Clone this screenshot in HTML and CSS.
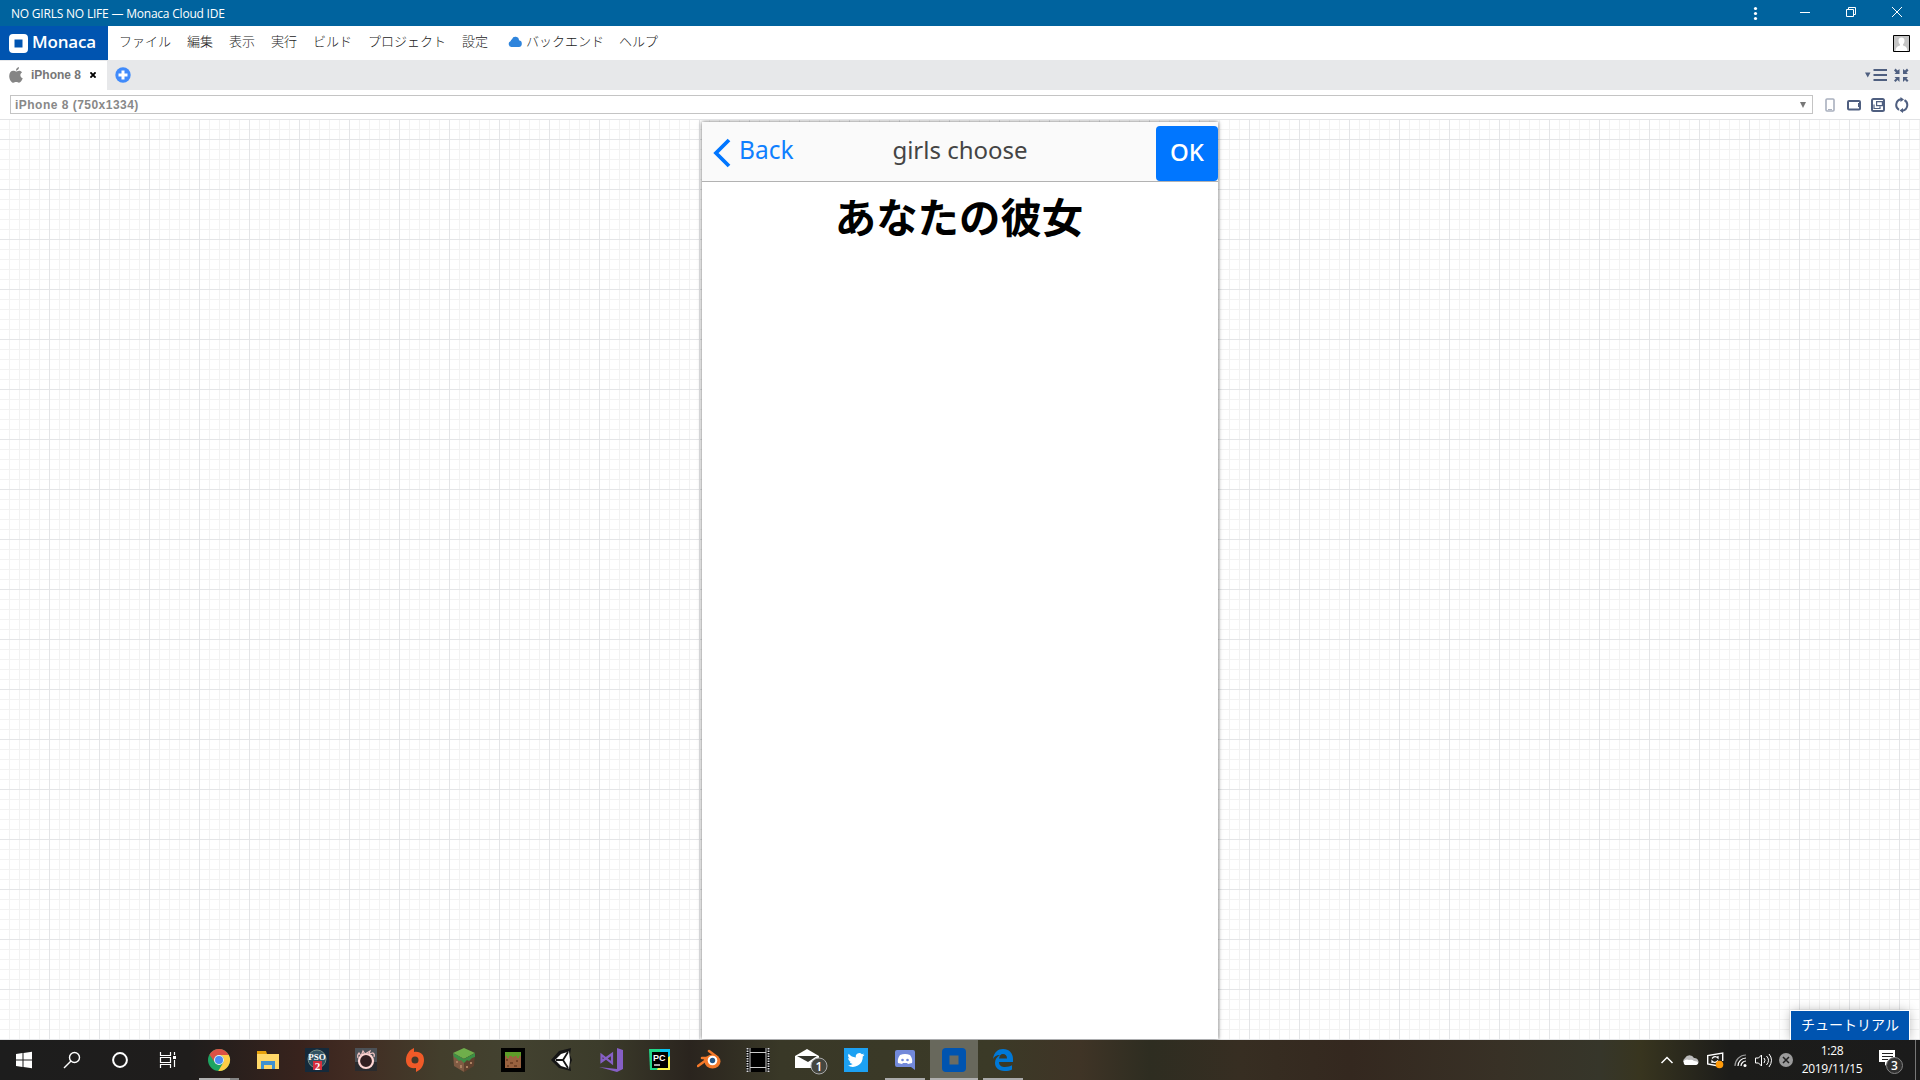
FILE: index.html
```html
<!DOCTYPE html>
<html lang="ja">
<head>
<meta charset="utf-8">
<title>NO GIRLS NO LIFE — Monaca Cloud IDE</title>
<link rel="stylesheet" href="styles.css">
</head>
<body>
<header class="titlebar">
  <span class="title">NO GIRLS NO LIFE — Monaca Cloud IDE</span>
  <svg class="window-controls" width="170" height="26" viewBox="0 0 170 26">
    <g fill="#fff"><circle cx="5.500" cy="8.500" r="1.600"/><circle cx="5.500" cy="13.500" r="1.600"/><circle cx="5.500" cy="18.500" r="1.600"/></g>
    <g fill="none" stroke="#fff"><path d="M50 12.500h10"/><path d="M96.500 9.500h7v7h-7zM98.500 9v-1.500h7v7h-1.500"/><path d="M142 7l10 10M152 7l-10 10"/></g>
  </svg>
</header>
<nav class="menubar">
  <div class="brand">
    <svg width="19" height="19" viewBox="0 0 19 19"><path fill="#fff" fill-rule="evenodd" d="M4 0h11a4 4 0 0 1 4 4v11a4 4 0 0 1-4 4H4a4 4 0 0 1-4-4V4a4 4 0 0 1 4-4zm1.500 5.500v8h8v-8z"/></svg>
    <span class="brand-name">Monaca</span>
  </div>
  <span class="menu file">ファイル</span><span class="menu edit">編集</span><span class="menu view">表示</span><span class="menu run">実行</span><span class="menu build">ビルド</span><span class="menu project">プロジェクト</span><span class="menu config">設定</span>
  <span class="menu backend"><svg width="14" height="11" viewBox="0 0 14 11"><path fill="#2e84dc" d="M3.300 11A3.200 3.200 0 0 1 2.700 4.900 2 2 0 0 1 4 3.200 3.600 3.600 0 0 1 11 4.300 3.400 3.400 0 0 1 11 11z"/></svg>バックエンド</span>
  <span class="menu help">ヘルプ</span>
  <svg class="avatar" width="17" height="17" viewBox="0 0 17 17"><path fill="#c5c5c5" stroke="#000" d="M.5.5h16v16H.5z"/><path fill="#fff" d="M8.500 2.500c2 0 3.200 1.400 3 3.500-.1 1.500-.7 2.600-1.500 3.200v1.300c2.600.8 4.200 1.800 4.400 5.500H2.600c.2-3.700 1.800-4.700 4.400-5.500V9.200C6.200 8.600 5.600 7.500 5.500 6c-.2-2.100 1-3.500 3-3.500z"/></svg>
</nav>
<div class="tabs">
  <div class="tab">
    <svg width="14" height="16" viewBox="0 0 14 16"><path fill="#858585" d="M10 0c.1 2-1.300 3.600-3.100 3.700C6.800 1.900 8.300.2 10 0zM7 4.500c.7 0 1.700-.8 3.100-.8 1.200 0 2.300.6 3 1.500-2.600 1.600-2.200 5 .6 6.100-.6 1.800-2.200 4.500-3.700 4.500-1.100 0-1.500-.7-2.800-.7-1.300 0-1.800.7-2.800.7C2.400 15.800.2 12.200.2 8.900c0-3.200 2-5.100 4-5.100 1.300 0 2.200.7 2.800.7z"/></svg>
    <span class="tab-name">iPhone 8</span>
    <svg width="6" height="6" viewBox="0 0 6 6"><path stroke="#000" stroke-width="1.900" d="M.4.4l5.200 5.200M5.600.4L.4 5.600"/></svg>
  </div>
  <svg class="add-tab" width="16" height="16" viewBox="0 0 16 16"><circle cx="8" cy="8" r="7.700" fill="#418bfb"/><path d="M8 3.500v9M3.500 8h9" stroke="#fff" stroke-width="3"/></svg>
  <svg class="tab-tools" width="44" height="16" viewBox="0 0 44 16"><g fill="#4f5f80"><path d="M0 5.500h5.500l-2.750 5zM8.500 2h13.500v2H8.500zM8.500 7h13.500v2H8.500zM8.500 12h13.500v2H8.500z"/><path d="M34.500 2v5h-5l1.500-1.500-2-2L30.500 1.500l2 2zM38 2v5h5l-1.500-1.500 2-2L42 1.500l-2 2zM34.500 15v-5h-5l1.500 1.500-2 2 1.500 1.500 2-2zM38 15v-5h5l-1.500 1.500 2 2-1.500 1.500-2-2z"/></g></svg>
</div>
<div class="device-bar">
  <div class="select"><span>iPhone 8 (750x1334)</span><svg width="6" height="6" viewBox="0 0 6 6"><path fill="#777" d="M0 0h6L3 6z"/></svg></div>
  <svg width="84" height="16" viewBox="0 0 84 16" fill="none">
    <rect x="1" y="2" width="8" height="12" rx="1" stroke="#a9b0be" stroke-width="1.600"/><path d="M3 12.500h4" stroke="#a9b0be"/>
    <rect x="23" y="4" width="12" height="8.500" rx="1" stroke="#4f5f80" stroke-width="2"/><path d="M34 6v4" stroke="#4f5f80" stroke-width="2"/>
    <rect x="47" y="2" width="12" height="12" rx="1.500" stroke="#4f5f80" stroke-width="2"/><path d="M51.600 4.600h5.800v4h-5.800zM49 7.500v4h6v-2" stroke="#4f5f80" stroke-width="1.200"/>
    <path d="M74 12.800A5.700 5.700 0 0 1 76 2.300M79.500 3.200A5.700 5.700 0 0 1 77.500 13.700" stroke="#4f5f80" stroke-width="2"/><path d="M75.500 0v5l3.500-2.500zM78 16v-5l-3.500 2.500z" fill="#4f5f80"/>
  </svg>
</div>
<main class="canvas">
  <section class="phone">
    <div class="phone-bar">
      <div class="back"><svg width="18" height="30" viewBox="0 0 18 30"><path d="M16 2L3 15l13 13" fill="none" stroke="#0076ff" stroke-width="3.800"/></svg><span>Back</span></div>
      <div class="phone-title">girls choose</div>
      <div class="action"><div class="ok">OK</div></div>
    </div>
    <h1>あなたの彼女</h1>
  </section>
  <div class="tutorial">チュートリアル</div>
</main>
<footer class="taskbar">
  <div class="app system"><svg width="24" height="24" viewBox="0 0 24 24"><path fill="#fff" d="M4 6l6.500-1v6.500H4zM11.500 4.900L20 3.700v7.800h-8.500zM4 12.500h6.500V19L4 18zM11.500 12.500H20v7.800l-8.500-1.200z"/></svg></div>
  <div class="app system"><svg width="24" height="24" viewBox="0 0 24 24"><g fill="none" stroke="#fff" stroke-width="1.400"><circle cx="14.500" cy="9.500" r="5"/><path d="M11 13l-7 7"/></g></svg></div>
  <div class="app system"><svg width="24" height="24" viewBox="0 0 24 24"><circle cx="12" cy="12" r="6.900" fill="none" stroke="#fff" stroke-width="2"/></svg></div>
  <div class="app system"><svg width="24" height="24" viewBox="0 0 24 24"><path d="M4.500 4v3.500h10V4M4.500 20v-3.500h10V20M4.500 9.500h10v5h-10zM18.500 4v3M18.500 12v7" fill="none" stroke="#fff" stroke-width="1.200"/><path d="M17 8h3v3h-3z" fill="#fff"/></svg></div>
  <div class="app open multi"><svg width="24" height="24" viewBox="0 0 24 24"><circle cx="12" cy="12" r="11" fill="#1da462"/><path fill="#dd5144" d="M2.500 6.500a11 11 0 0 1 19 0L22 7H12a5 5 0 0 0-4.700 6.700z"/><path fill="#ffcd46" d="M12 7h9.800a11 11 0 0 1-10.500 16l5-8.500A5 5 0 0 0 12 7z"/><circle cx="12" cy="12" r="5" fill="#f1f1f1"/><circle cx="12" cy="12" r="4" fill="#4c8bf5"/></svg></div>
  <div class="app"><svg width="24" height="24" viewBox="0 0 24 24"><path fill="#e8a20c" d="M1 3h9l1 3h12v3H1z"/><path fill="#ffd768" d="M1 6h22v15H1z"/><path fill="#3f91d1" d="M5 13h14v8h-3v-4H8v4H5z"/></svg></div>
  <div class="app"><svg width="24" height="24" viewBox="0 0 24 24"><path fill="#152a3b" d="M0 0h24v24H0z"/><circle cx="12" cy="11" r="9" fill="#315262" stroke="#778b82"/><path fill="#d42e3d" d="M8 13h9v9H8z"/><text x="12" y="12" class="pso">PSO</text><text x="12.500" y="22" class="pso two">2</text></svg></div>
  <div class="app"><svg width="24" height="24" viewBox="0 0 24 24"><path fill="#4c5157" d="M1 0h22v23H1z"/><path fill="#2a2b2e" d="M1 14h22v9H1z"/><circle cx="12" cy="13" r="7" fill="#322022" stroke="#ffd7d5" stroke-width="2.200"/><path d="M4 10q-1-3 1-5l2 3 2-5 2 3 5-3-1 3 4-1q2 1 1 4" fill="none" stroke="#efc2c1" stroke-width="1.200"/></svg></div>
  <div class="app"><svg width="24" height="24" viewBox="0 0 24 24"><path fill="#f05a28" fill-rule="evenodd" d="M11 0v4C18 3 21 7 21 12c0 5-3 10-8 12v-4C6 21 3 17 3 12 3 7 6 2 11 0zM12 8.500a3.500 3.500 0 1 0 0 7 3.500 3.500 0 0 0 0-7z"/></svg></div>
  <div class="app"><svg width="24" height="24" viewBox="0 0 24 24"><path fill="#6fae4b" d="M12 0l11 5-11 6L1 5z"/><path fill="#805b43" d="M1 5l11 6v13L2 18z"/><path fill="#60412e" d="M23 5l-11 6v13l10-6z"/><path fill="#3b8f45" d="M1 5l11 6 11-6v4l-3 1-3 3-2-1-3 3-3-3-2 1-3-3-2-1z"/><path d="M4 13h2v2H4zM8 17h2v3H8zM14 18h2v2h-2zM18 14h2v2h-2z" fill="#aa8060"/></svg></div>
  <div class="app"><svg width="24" height="24" viewBox="0 0 24 24"><path d="M0 0h24v24H0z"/><path fill="#99623f" d="M4 4h16v16H4z"/><path fill="#5e9c29" d="M4 4h16v4h-2v2h-2V8h-3v1h-2V8H8v2H6V8H4z"/><path d="M5 11h2v2H5zM9 14h3v2H9zM15 12h2v2h-2zM13 17h3v2h-3zM6 17h2v2H6z" fill="#734428"/></svg></div>
  <div class="app"><svg width="24" height="24" viewBox="0 0 24 24"><path fill="#151515" d="M1 12L9 3l12-3-1 7 2 5-2 5 1 6-12-3z"/><path fill="#fff" d="M5 12l6-6 8-2.500 1 8.500-1 8.500-8-2.500z"/><path d="M6 12h7l5-8M13 12l5 8" fill="none" stroke="#151515" stroke-width="1.800"/></svg></div>
  <div class="app"><svg width="24" height="24" viewBox="0 0 24 24"><path fill="#865fc5" d="M18 0l6 2v19l-6 3L0 19l18 2z"/><path fill="none" stroke="#865fc5" stroke-width="2.200" d="M2.500 7v6.500L13 6v9z"/></svg></div>
  <div class="app"><svg width="24" height="24" viewBox="0 0 24 24"><path fill="#21d789" d="M1 1h13l-4 21H2z"/><path fill="#07c3f2" d="M12 1h10v9l-9 3z"/><path fill="#fcf84a" d="M22 8v14H9l3-7z"/><path d="M4 4h16v16H4z"/><path d="M6 17h6" stroke="#fff" stroke-width="1.300"/><text x="5" y="12.500" class="pc">PC</text></svg></div>
  <div class="app"><svg width="24" height="24" viewBox="0 0 24 24"><path d="M1 18l11-8H5M12 3l8 6" fill="none" stroke="#f5792a" stroke-width="2.600" stroke-linecap="round"/><ellipse cx="15.500" cy="13.500" rx="8" ry="7" fill="#f5792a"/><path fill="#f5792a" d="M5 9h8l4-2-4 6H8z"/><circle cx="15.500" cy="12.500" r="4.800" fill="#fff"/><circle cx="15.500" cy="12.500" r="2.700" fill="#265787"/></svg></div>
  <div class="app"><svg width="24" height="24" viewBox="0 0 24 24"><path d="M0 0h24v24H0z"/><path d="M1.500 0v24M22.500 0v24" stroke="#ddd" stroke-width="2" stroke-dasharray="1.500 1"/><path d="M4 0v24M20 0v24M4 4.500h16M4 19.500h16" stroke="#ccc"/></svg></div>
  <div class="app"><svg width="34" height="30" viewBox="0 0 34 30" class="mail"><path fill="#fff" d="M0 11l12-7 12 7v12H0z"/><path fill="#33342b" d="M2 11h20l-9 6z"/><circle cx="24" cy="21" r="8" fill="#45463f" stroke="#aaa"/><text x="24" y="25.500" class="badge">1</text></svg></div>
  <div class="app"><svg width="24" height="24" viewBox="0 0 24 24"><path fill="#1da1f2" d="M0 0h24v24H0z"/><path fill="#fff" transform="translate(3.500 3.500) scale(.71)" d="M24 4.600a10 10 0 0 1-2.800.8 5 5 0 0 0 2.100-2.700 10 10 0 0 1-3.100 1.200 4.900 4.900 0 0 0-8.400 4.500A14 14 0 0 1 1.700 3.200a4.900 4.900 0 0 0 1.500 6.500 5 5 0 0 1-2.200-.6 4.900 4.900 0 0 0 3.900 4.900 5 5 0 0 1-2.200.1 4.900 4.900 0 0 0 4.600 3.400A10 10 0 0 1 0 19.500 14 14 0 0 0 21.500 7 10 10 0 0 0 24 4.600z"/></svg></div>
  <div class="app open"><svg width="24" height="24" viewBox="0 0 24 24"><path fill="#7289da" d="M4 2h16a2 2 0 0 1 2 2v18l-4-3H4a2 2 0 0 1-2-2V4a2 2 0 0 1 2-2z"/><path fill="#fff" d="M7 7q5-2 10 0 3 4 2 8l-4 1-1-1h-4l-1 1-4-1q-1-4 2-8z"/><circle cx="9.500" cy="12" r="1.300" fill="#7289da"/><circle cx="14.500" cy="12" r="1.300" fill="#7289da"/></svg></div>
  <div class="app open active"><svg width="24" height="24" viewBox="0 0 24 24"><rect width="24" height="24" rx="4" fill="#0054b0"/><path fill="#6c6c61" d="M7.500 7.500h9v9h-9z"/></svg></div>
  <div class="app open"><svg width="24" height="24" viewBox="0 0 24 24"><path fill="#0078d7" d="M2 11C3 4 7 1 12 1c6 0 10 4 10 10v3H8c0 4 3 5 6 5 3 0 5-.7 7-1.700v4.200c-2 1-4 1.500-7.500 1.500C7 23 4 19 4 15c0-4 2-6 5-8-4 0-6 2-7 4zm6-.5h8c0-3-1.500-4.500-4-4.500S8.500 8 8 10.500z"/></svg></div>
  <div class="tray">
    <svg width="133" height="40" viewBox="0 0 133 40">
      <path d="M1.500 23l5.500-5.500 5.500 5.500" fill="none" stroke="#fff" stroke-width="1.500"/>
      <path fill="#bbb" d="M23 22a5 5 0 0 1 2-4 5 5 0 0 1 9 0 4 4 0 0 1 4 6z"/><path fill="#fff" d="M25 25a3 3 0 0 1 0-5q2-1 4 0 3-1 5 1 4 0 4 2 0 2-3 2z"/>
      <path d="M56 25.500l-8.300-1.500v-8.500l15-2.500v8" fill="none" stroke="#fff" stroke-width="1.400"/><path d="M52 18.500q3-3.500 6-.5v-2M58 20.500q-3 3.500-6 .5v2" fill="none" stroke="#fff" stroke-width="1.200"/><circle cx="59.500" cy="24.500" r="3.800" fill="#ff9a09"/>
      <g fill="none" stroke="#999" stroke-width="1.200"><path d="M75 26a11 11 0 0 1 11-11"/><path stroke="#fff" d="M78 26a8 8 0 0 1 8-8M81 26a5 5 0 0 1 5-5"/></g><circle cx="85" cy="25.500" r="1.500" fill="#fff"/>
      <path d="M95.500 18h3l3-3v11l-3-3h-3zM104 18q2 2 0 5M106.500 16q4 4 0 9M109 14q5 6 0 13" fill="none" stroke="#fff"/>
      <circle cx="126" cy="20" r="7" fill="#9b9b9b"/><path d="M123 17l6 6M129 17l-6 6" stroke="#202020" stroke-width="1.500"/>
    </svg>
    <div class="clock"><span>1:28</span><span>2019/11/15</span></div>
    <svg class="notices" width="28" height="32" viewBox="0 0 28 32"><path fill="#fff" d="M-1 4h16v12H8l-3 4v-4h-6z"/><path d="M2 7.500h11M2 10.500h11M2 13.500h6" stroke="#222"/><circle cx="14.500" cy="19.500" r="8" fill="#303030" stroke="#858585"/><text x="14.500" y="23.500" class="badge">3</text></svg>
    <div class="show-desktop"></div>
  </div>
</footer>
</body>
</html>
```
FILE: styles.css
```css
* { box-sizing: border-box; }
body { margin: 0; width: 1920px; height: 1080px; overflow: hidden; display: flex; flex-direction: column; background: #fff; font-family: "Noto Sans", "Noto Sans CJK JP", sans-serif; }
svg { display: block; flex: none; }
span { white-space: nowrap; }
.titlebar { flex: none; height: 26px; background: #00639e; color: #fff; display: flex; justify-content: space-between; align-items: center; padding-left: 11px; }
.title { font: 12px/18px "Open Sans", sans-serif; letter-spacing: -.21px; padding-top: 2px; }
.menubar { flex: none; height: 34px; display: flex; align-items: center; font-family: "Noto Sans CJK JP", sans-serif; font-size: 13px; font-weight: 300; color: #222; padding-right: 10px; }
.brand { width: 108px; height: 34px; background: #0054b0; color: #fff; display: flex; align-items: center; gap: 4px; padding-left: 9px; margin-right: 11px; }
.brand-name { font: 600 17px/24px "Open Sans", sans-serif; letter-spacing: -.2px; padding-bottom: 2px; }
.menu { line-height: 20px; padding-bottom: 4px; }
.file { width: 68px; }
.edit, .view, .run { width: 42px; }
.build { width: 55px; }
.project { width: 94px; }
.config { width: 46px; }
.backend { display: flex; align-items: center; gap: 4px; width: 111px; }
.avatar { margin-left: auto; }
.tabs { flex: none; height: 30px; background: #e7e8ea; display: flex; align-items: center; }
.tab { width: 107px; height: 30px; background: #fff; display: flex; align-items: center; padding: 0 0 1px 9px; font: bold 12px/16px "Liberation Sans", sans-serif; color: #777; border-top: 1px solid #e7e8ea; }
.tab-name { width: 50px; margin: 0 9px 0 8px; }
.add-tab { margin-left: 8px; }
.tab-tools { margin: 0 11px 0 auto; }
.device-bar { flex: none; height: 29px; display: flex; padding: 5px 11px 0 10px; justify-content: space-between; }
.select { width: 1803px; height: 19px; border: 1px solid #c4c4c4; display: flex; justify-content: space-between; align-items: center; padding: 0 6px 0 4px; font: bold 12px/16px "Liberation Sans", sans-serif; letter-spacing: .48px; color: #888; }
.device-bar > svg { margin-top: 2px; }
.canvas { flex: none; position: relative; height: 921px; border-top: 1px solid #e2e3e5; overflow: hidden; display: flex; justify-content: center; padding-top: 2px;
  background-color: #fff;
  background-image: linear-gradient(to right, transparent 49px, #e4e5e7 49px), linear-gradient(transparent 49px, #e4e5e7 49px), linear-gradient(to right, transparent 9px, #f2f2f2 9px), linear-gradient(transparent 9px, #f2f2f2 9px);
  background-size: 50px 50px, 50px 50px, 10px 10px, 10px 10px;
  background-position: 0 0, 0 -30px, 0 0, 0 0; }
.phone { width: 516px; height: 917px; flex: none; background: #fff; box-shadow: 0 0 4px rgba(0,0,0,.6); }
.phone-bar { height: 60px; background: #fafafa; border-bottom: 1px solid #b2b2b2; display: grid; grid-template-columns: 150px 1fr 150px; font: 24px/34px "Noto Sans", sans-serif; }
.back { display: flex; align-items: center; padding: 2px 0 0 11px; gap: 8px; color: #0f7fff; font-size: 24.5px; }
.back span { padding-bottom: 5px; }
.phone-title { text-align: center; padding-top: 11px; color: #444; }
.action { display: flex; justify-content: flex-end; padding-top: 4px; }
.ok { width: 62px; height: 55px; border-radius: 4px; background: #0076ff; color: #fff; font-size: 24px; font-weight: 500; line-height: 52px; text-align: center; }
h1 { margin: 3px 2px 0 0; text-align: center; font: bold 41.4px/60px "Noto Sans CJK JP", sans-serif; color: #000; }
.tutorial { position: absolute; right: 11px; bottom: 0; width: 118px; height: 29px; background: #0054b0; color: #fff; box-shadow: 0 0 12px rgba(0,0,0,.3); outline: 1px solid #fff; text-align: center; font: 14px/27px "Noto Sans CJK JP", sans-serif; }
.taskbar { flex: none; height: 40px; display: flex; background: linear-gradient(to right, #1d1d1d 0, #1f1d1c 190px, #38231d 300px, #412b22 350px, #433e2c 440px, #434230 510px, #3c3c2b 600px, #2a241e 690px, #393827 780px, #3b3a27 990px, #3f3426 1080px, #2e2d21 1150px, #372e22 1240px, #34281f 1350px, #383126 1500px, #36362a 1600px, #38351f 1640px, #1c1c1a 1730px, #1b1b1b 1920px); }
.app { width: 49px; height: 40px; display: flex; align-items: center; justify-content: center; flex: none; }
.system { width: 48px; }
.multi { margin-left: 2px; }
.open { background: linear-gradient(#aaa, #aaa) center bottom / 40px 2px no-repeat; }
.multi { background-image: linear-gradient(to right, #b0b0b0 31px, #858585 31px); }
.active { width: 48px; margin-left: 1px; background: linear-gradient(#b0b0b0, #b0b0b0) center bottom / 100% 2px no-repeat #68685c; }
.mail { margin-right: -10px; }
.tray { margin-left: auto; display: flex; align-items: center; color: #fff; }
.clock { width: 78px; display: flex; flex-direction: column; align-items: center; font: 12px/18px "Open Sans", sans-serif; letter-spacing: -.3px; }
.notices { margin: 4px 7px 0 9px; overflow: visible; }
.show-desktop { width: 5px; height: 40px; border-left: 1px solid #777; }
.pso { font: bold 9px "Liberation Serif", serif; fill: #fff; text-anchor: middle; }
.two { font-size: 11px; }
.pc { font: bold 9px "Liberation Sans", sans-serif; fill: #fff; }
.badge { font: 600 12px "Open Sans", sans-serif; fill: #fff; text-anchor: middle; }
```
